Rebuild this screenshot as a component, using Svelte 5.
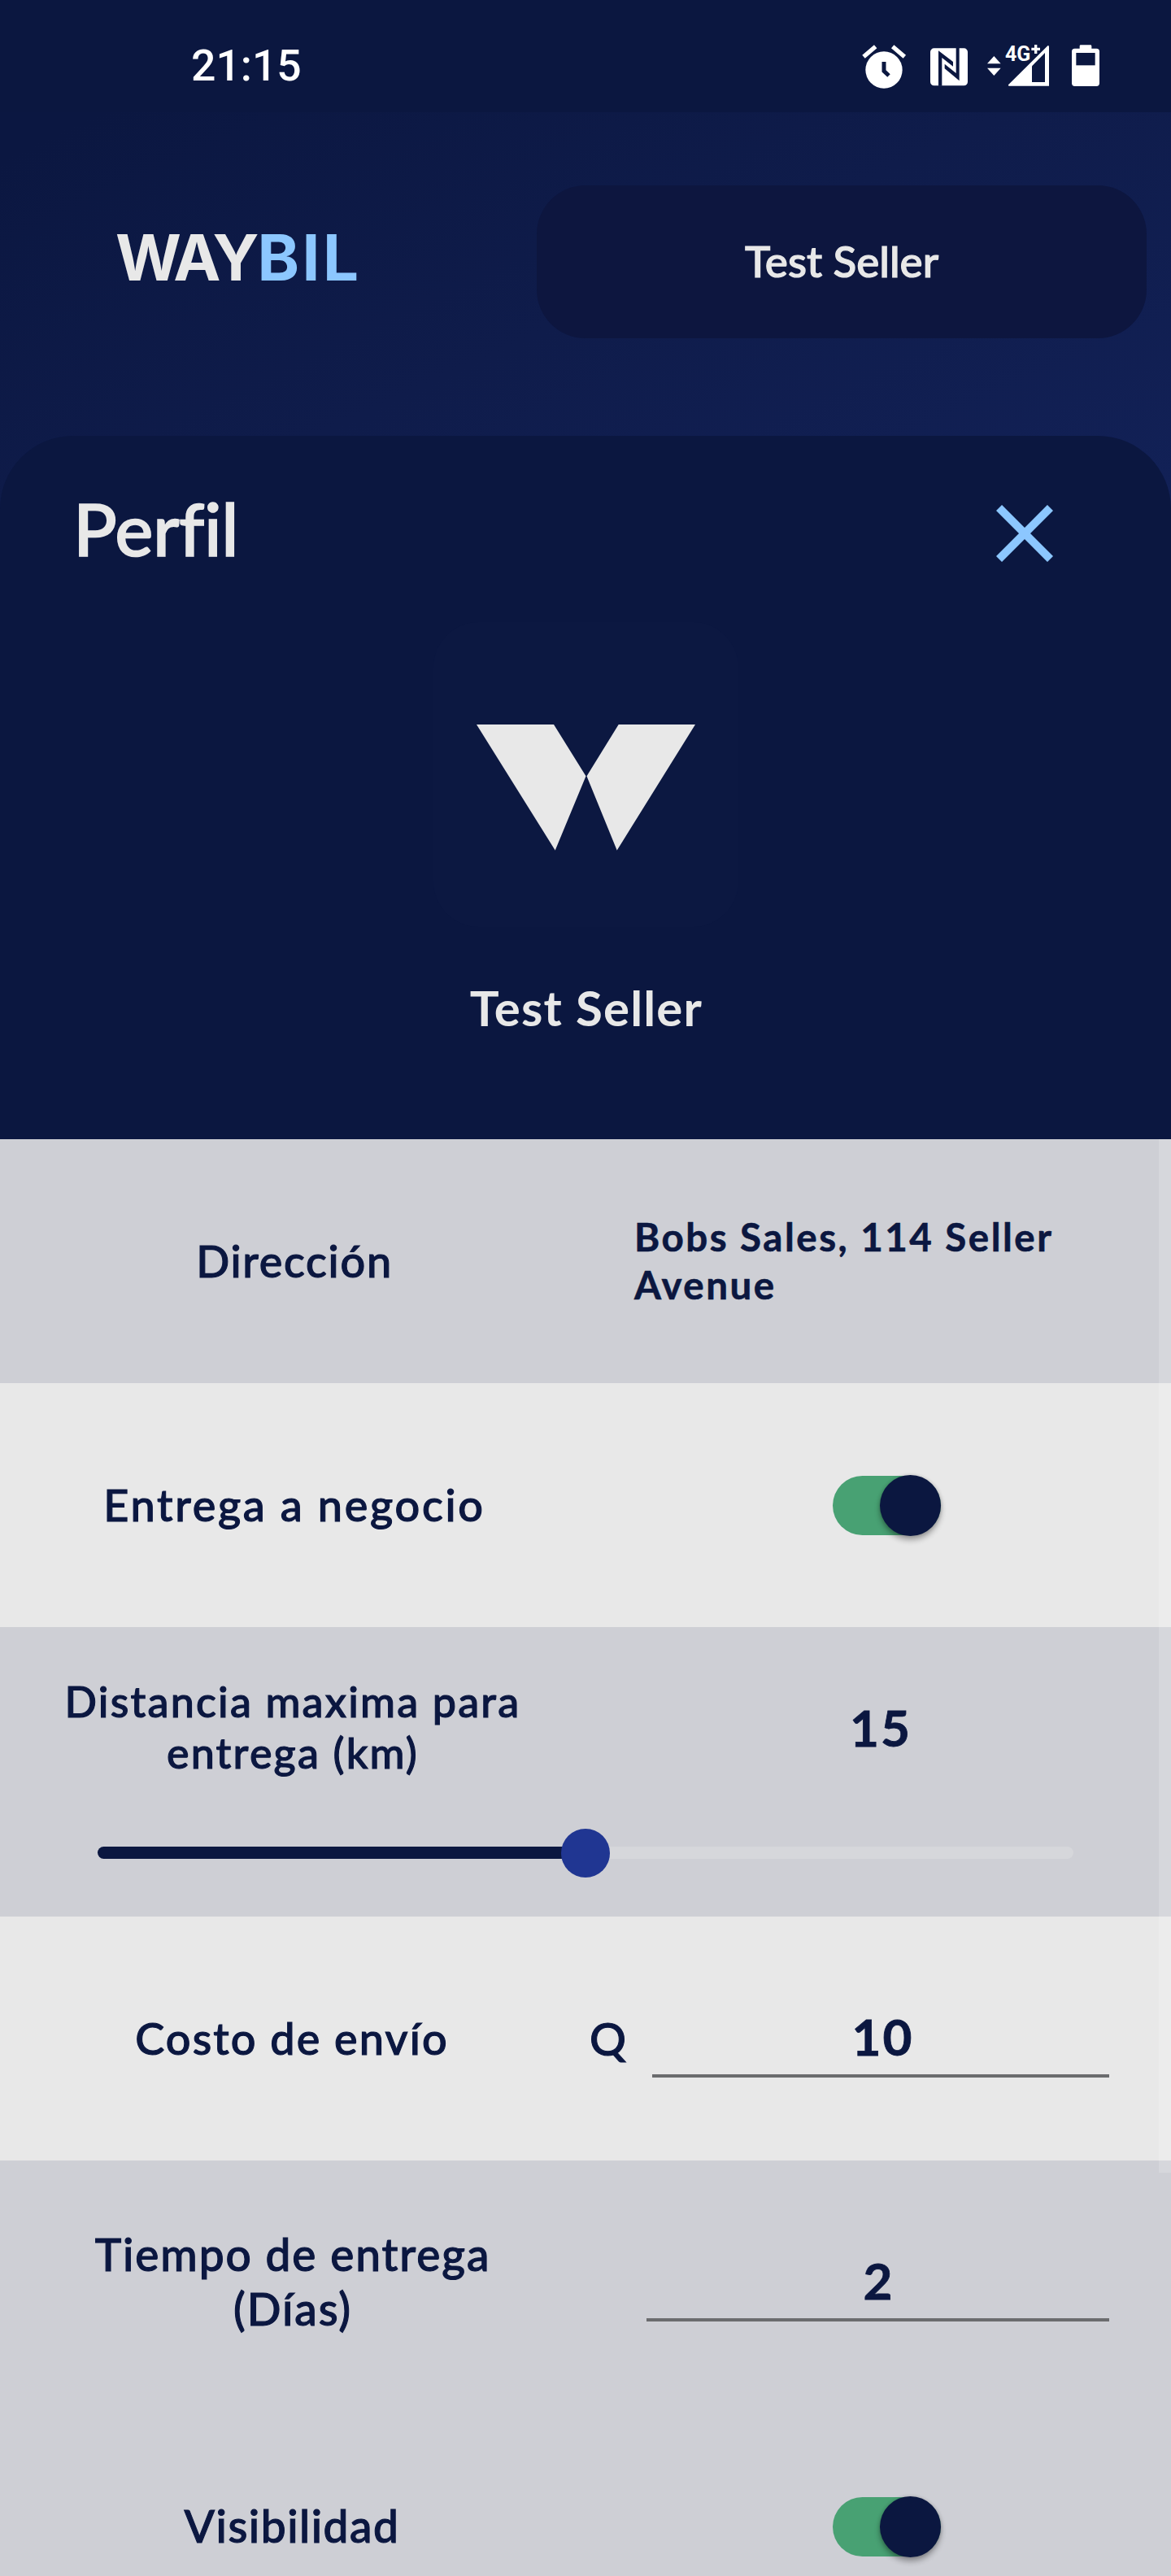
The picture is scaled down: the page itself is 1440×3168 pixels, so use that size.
<script>
  let delivery = $state(true);
  let visible = $state(true);
  let distance = $state(15);
  const maxDistance = 30;
</script>

{#snippet toggle(on, label)}
  <button class="toggle" class:on role="switch" aria-checked={on} aria-label={label}>
    <span class="knob"></span>
  </button>
{/snippet}

<div class="app">
  <div class="status">
    <span class="clock">21:15</span>
    <!-- alarm, NFC, mobile signal, battery -->
    <svg class="indicators" viewBox="0 0 1050 300" width="350" height="100" aria-hidden="true">
      <g fill="none" stroke="#fff" stroke-width="16">
        <path d="M96 119 140 82M203 82 247 119" />
      </g>
      <circle cx="171" cy="168" r="68" fill="#fff" />
      <path d="M171 138v34l18 17" fill="none" stroke="#0b1740" stroke-width="15" />

      <rect x="342" y="88" width="138" height="138" rx="14" fill="#fff" />
      <g fill="#0b1740">
        <path d="M372 227V97L426 138V155L385 123V227z" />
        <path d="M437 87H449V208L395 163V146L437 180z" />
      </g>

      <path d="M552 145 577 117 602 145zM552 161 577 189 602 161z" fill="#fff" />
      <path d="M630 223 776 78Q780 77 780 84V227H632Q629 226 630 223z" fill="#fff" />
      <path d="M717 154 765 105V213H717z" fill="#0b1740" />
      <path d="M731 72V110M712 91H749" stroke="#0b1740" stroke-width="22" />
      <path d="M731 75V108M715 91H747" stroke="#fff" stroke-width="10" />
      <text class="network" x="618" y="134" textLength="94" lengthAdjust="spacingAndGlyphs">4G</text>

      <path d="M893 80q0-4 4-4h36q4 0 4 4v9h18q11 0 11 11v117q0 11-11 11h-80q-11 0-11-11V100q0-11 11-11h18z" fill="#fff" />
      <path d="M880 105h70v46h-70z" fill="#0b1740" />
    </svg>
  </div>

  <header class="header">
    <div class="brand"><span class="way">WAY</span><span class="bil">BIL</span></div>
    <button class="account">Test Seller</button>
  </header>

  <section class="sheet">
    <div class="title-bar">
      <h1>Perfil</h1>
      <button class="close" aria-label="Cerrar">
        <svg viewBox="0 0 70 70" width="70" height="70">
          <path d="M3.5 3.5 66.5 66.5M66.5 3.5 3.5 66.5" stroke="#8cc7ff" stroke-width="10" />
        </svg>
      </button>
    </div>
    <div class="avatar">
      <svg viewBox="0 0 375 375" width="375" height="375" aria-hidden="true">
        <path d="M53 126H148L187.5 189.5 149.7 280.7zM227.7 126H322L225.7 280.7 188.5 189.5z" fill="#e8e8e8" />
      </svg>
    </div>
    <h2>Test Seller</h2>
  </section>

  <main class="settings">
    <div class="row shade">
      <div class="label direccion">Dirección</div>
      <div class="value address">Bobs Sales, 114 Seller Avenue</div>
    </div>

    <div class="row">
      <div class="label entrega">Entrega a negocio</div>
      <div class="value switch">{@render toggle(delivery, 'Entrega a negocio')}</div>
    </div>

    <div class="row shade range">
      <div class="label distancia">Distancia maxima para entrega (km)</div>
      <div class="value number">{distance}</div>
      <div class="slider">
        <div class="track">
          <div class="fill" style:width="{(distance / maxDistance) * 100}%"><span class="thumb"></span></div>
        </div>
      </div>
    </div>

    <div class="row">
      <div class="label costo">Costo de envío</div>
      <div class="value field">
        <span class="currency">Q</span>
        <div class="input two">10</div>
      </div>
    </div>

    <div class="row shade">
      <div class="label tiempo">Tiempo de entrega (Días)</div>
      <div class="value field days">
        <div class="input">2</div>
      </div>
    </div>

    <div class="row shade">
      <div class="label visibilidad">Visibilidad</div>
      <div class="value switch">{@render toggle(visible, 'Visibilidad')}</div>
    </div>

    <div class="scrollbar"></div>
  </main>
</div>

<style>
  :global(body) {
    margin: 0;
  }

  .app {
    display: flex;
    flex-direction: column;
    width: 1440px;
    height: 3168px;
    overflow: hidden;
    background: #0b1740;
    color: #0b1740;
    font-family: Lato, 'Open Sans', sans-serif;
    font-weight: 500;
    font-variant-ligatures: none;
  }

  button {
    padding: 0;
    border: 0;
    background: none;
    font: inherit;
  }

  .status {
    display: flex;
    flex: none;
    justify-content: space-between;
    box-sizing: border-box;
    height: 138px;
    padding: 30px 60px 0 235px;
    background: #0b1740;
  }

  .clock {
    color: #fff;
    font: 500 53.5px/102px Roboto, sans-serif;
  }

  .network {
    fill: #fff;
    font: 700 75px Roboto, sans-serif;
  }

  .header {
    display: flex;
    flex: none;
    justify-content: space-between;
    align-items: flex-start;
    box-sizing: border-box;
    height: 488px;
    padding: 90px 30px 0 142px;
    background: linear-gradient(155deg, #0b1741 5%, #0f1c4b 50%, #122157 100%);
  }

  .brand {
    display: flex;
    font: 700 78px/177px Inter, sans-serif;
  }

  .way {
    color: #e8e8e8;
    letter-spacing: -4px;
  }

  .bil {
    margin-left: 2px;
    color: #8cc7ff;
    letter-spacing: 3.5px;
  }

  .account {
    width: 750px;
    height: 188px;
    padding-bottom: 3px;
    border-radius: 60px;
    background: #0d163f;
    color: #e8e8e8;
    font-size: 53px;
    -webkit-text-stroke: 1.2px currentColor;
  }

  .sheet {
    display: flex;
    flex: none;
    flex-direction: column;
    align-items: center;
    box-sizing: border-box;
    height: 865px;
    margin-top: -90px;
    padding-top: 70px;
    border-radius: 90px 90px 0 0;
    background: #0b1740;
    color: #e8e8e8;
  }

  .title-bar {
    display: flex;
    justify-content: space-between;
    align-items: center;
    box-sizing: border-box;
    width: 100%;
    height: 100px;
    padding: 0 145px 0 90px;
  }

  h1 {
    margin: 0 0 12px;
    font-size: 89px;
    font-weight: 500;
    line-height: 100px;
    letter-spacing: -0.4px;
    -webkit-text-stroke: 1.6px currentColor;
  }

  .close {
    display: flex;
  }

  .avatar {
    display: flex;
    margin-top: 59px;
    border-radius: 56px;
    background: #0c1841;
  }

  h2 {
    margin: 63px 0 0;
    padding-left: 2px;
    font-size: 60px;
    font-weight: 700;
    line-height: 72px;
    letter-spacing: 1.2px;
  }

  .settings {
    position: relative;
    flex: none;
  }

  .row {
    display: grid;
    grid-template-columns: 1fr 1fr;
    align-items: center;
    height: 300px;
    background: #e8e8e8;
  }

  .shade {
    background: #cecfd5;
  }

  .label {
    box-sizing: border-box;
    padding: 0 58px 2px 62px;
    font-size: 54px;
    line-height: 67px;
    text-align: center;
    -webkit-text-stroke: 1.1px currentColor;
  }

  .direccion {
    letter-spacing: 1.7px;
  }

  .entrega {
    letter-spacing: 2.7px;
  }

  .distancia {
    padding: 0 60px;
    font-size: 52px;
    line-height: 62.5px;
    letter-spacing: 2.2px;
  }

  .costo {
    padding-right: 64px;
    letter-spacing: 2.1px;
  }

  .tiempo {
    padding: 0 100px 3px;
    font-size: 55px;
    letter-spacing: 1.9px;
  }

  .visibilidad {
    padding-right: 64px;
    font-size: 55px;
    letter-spacing: 1.5px;
  }

  .address {
    padding: 0 80px 2px 60px;
    font-size: 47.5px;
    font-weight: 700;
    line-height: 59.5px;
    letter-spacing: 2.5px;
    -webkit-text-stroke: 0.6px currentColor;
  }

  .switch {
    display: flex;
    justify-content: center;
    padding-left: 21px;
  }

  .toggle {
    display: flex;
    align-items: center;
    width: 133px;
    height: 73px;
    border-radius: 37px;
    background: #a9abb3;
  }

  .toggle.on {
    justify-content: flex-end;
    background: #48a173;
  }

  .knob {
    flex: none;
    width: 75px;
    height: 75px;
    border-radius: 50%;
    background: #0b1740;
    box-shadow: 0 5px 7px rgb(0 0 0 / 32%), 0 0 4px rgb(0 0 0 / 16%);
  }

  .number {
    padding-left: 6px;
    font-size: 62px;
    font-weight: 700;
    letter-spacing: 2px;
    text-align: center;
    -webkit-text-stroke: 0.8px currentColor;
  }

  .range {
    grid-template-rows: 245px 65px;
    align-content: start;
    height: 356px;
  }

  .slider {
    grid-column: 1 / -1;
    padding: 0 120px;
  }

  .track {
    height: 15px;
    border-radius: 8px;
    background: #d6d7db;
  }

  .fill {
    display: flex;
    justify-content: flex-end;
    align-items: center;
    height: 100%;
    border-radius: 8px;
    background: #0b1740;
  }

  .thumb {
    flex: none;
    width: 60px;
    height: 60px;
    margin-right: -30px;
    border-radius: 50%;
    background: #203692;
  }

  .field {
    display: flex;
    align-items: center;
    padding: 0 76px 0 5px;
  }

  .days {
    padding-left: 75px;
  }

  .currency {
    width: 77px;
    padding-bottom: 2px;
    font-size: 56px;
    -webkit-text-stroke: 1.1px currentColor;
  }

  .input {
    flex: 1;
    box-sizing: border-box;
    height: 96px;
    border-bottom: 4px solid #6b6c6e;
    font-size: 62px;
    font-weight: 700;
    line-height: 90px;
    text-align: center;
    -webkit-text-stroke: 0.8px currentColor;
  }

  .two {
    padding-left: 5px;
    letter-spacing: 2px;
  }

  .scrollbar {
    position: absolute;
    top: 0;
    right: 0;
    width: 15px;
    height: 1271px;
    background: rgb(255 255 255 / 18%);
  }
</style>
